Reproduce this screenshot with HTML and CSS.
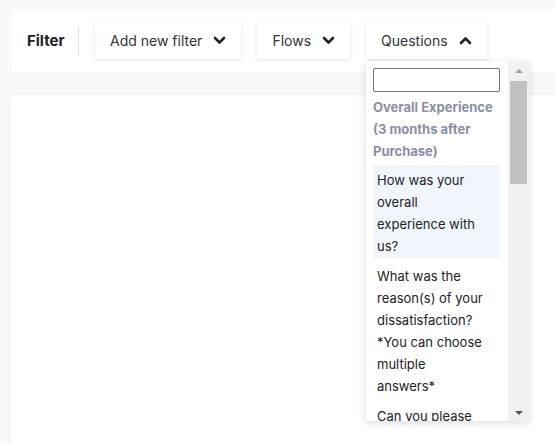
FILE: index.html
```html
<!DOCTYPE html>
<html>
<head>
<meta charset="utf-8">
<link rel="stylesheet" href="styles.css">
</head>
<body>
<div class="page">
  <div class="filterbar">
    <span class="filter-label">Filter</span>
    <span class="divider"></span>
    <div class="btn">
      <span>Add new filter</span>
      <svg class="chev" width="13" height="9" viewBox="0 0 13 9"><path d="M2 2 L6.5 6.5 L11 2" fill="none" stroke="#222" stroke-width="2.6" stroke-linecap="round" stroke-linejoin="round"/></svg>
    </div>
    <div class="btn">
      <span>Flows</span>
      <svg class="chev" width="13" height="9" viewBox="0 0 13 9"><path d="M2 2 L6.5 6.5 L11 2" fill="none" stroke="#222" stroke-width="2.6" stroke-linecap="round" stroke-linejoin="round"/></svg>
    </div>
    <div class="btn btn-open">
      <span>Questions</span>
      <svg class="chev" width="13" height="9" viewBox="0 0 13 9"><path d="M2 7 L6.5 2.5 L11 7" fill="none" stroke="#222" stroke-width="2.6" stroke-linecap="round" stroke-linejoin="round"/></svg>
      <div class="dropdown">
        <div class="list">
          <input class="search" type="text">
          <div class="group">Overall Experience (3 months after Purchase)</div>
          <div class="option active">How was your overall experience with us?</div>
          <div class="option">What was the reason(s) of your dissatisfaction? *You can choose multiple answers*</div>
          <div class="option">Can you please tell us more?</div>
        </div>
        <div class="scrollbar">
          <div class="arrow arrow-up"></div>
          <div class="thumb"></div>
          <div class="track"></div>
          <div class="arrow arrow-down"></div>
        </div>
      </div>
    </div>
  </div>
  <div class="content"></div>
</div>
</body>
</html>
```

FILE: styles.css
```css
html, body {
  margin: 0;
  padding: 0;
  background: #f8f9fb;
  font-family: Inter, "Open Sans", sans-serif;
  overflow: hidden;
}
.page {
  padding: 9px 0 0 11px;
  height: 444px;
  box-sizing: border-box;
  display: flex;
  flex-direction: column;
  gap: 23px;
}
.filterbar {
  background: #fff;
  height: 63px;
  display: flex;
  align-items: center;
  padding-left: 16px;
  gap: 16px;
  position: relative;
  z-index: 2;
  box-shadow: 0 0 3px rgba(0,0,0,0.04);
}
.filter-label {
  font-size: 15px;
  font-weight: 700;
  color: #222;
  width: 35px;
}
.divider {
  width: 1px;
  height: 28px;
  background: #dcdcdf;
}
.btn {
  position: relative;
  height: 37px;
  display: flex;
  align-items: center;
  gap: 11px;
  padding: 0 15px 0 15px;
  background: #fff;
  font-size: 14px;
  color: #333;
  box-shadow: 0 1px 4px rgba(0,0,0,0.12);
  border-radius: 2px;
  box-sizing: border-box;
}
.chev { display: block; }
.dropdown {
  position: absolute;
  top: 39px;
  left: 0;
  width: 163px;
  height: 360px;
  background: #fff;
  box-shadow: 0 2px 8px rgba(0,0,0,0.14);
  display: flex;
}
.list {
  flex: 1;
  overflow: hidden;
  padding: 7px 8px 0 7px;
}
.search {
  display: block;
  width: 127px;
  height: 24px;
  box-sizing: border-box;
  border: 1px solid #767676;
  border-radius: 2px;
  margin: 0 0 4px 0;
}
.group {
  font-size: 13px;
  line-height: 22px;
  font-weight: 700;
  color: #8c8da6;
  margin-bottom: 3px;
}
.option {
  font-size: 13px;
  line-height: 22px;
  color: #222;
  padding: 4px 16px 4px 4px;
}
.option.active {
  background: #f1f6fd;
  padding-bottom: 1px;
  margin-bottom: 3px;
}
.scrollbar {
  width: 21px;
  background: #f1f1f1;
  display: flex;
  flex-direction: column;
  align-items: center;
}
.arrow {
  height: 20px;
  width: 100%;
  position: relative;
}
.arrow-up::after, .arrow-down::after {
  content: "";
  position: absolute;
  left: 7px;
  width: 0;
  height: 0;
  border-left: 4px solid transparent;
  border-right: 4px solid transparent;
}
.arrow-up::after {
  top: 8px;
  border-bottom: 4px solid #a3a3a3;
}
.arrow-down::after {
  top: 10px;
  border-top: 4px solid #505050;
}
.thumb {
  width: 17px;
  height: 103px;
  background: #c1c1c1;
}
.track { flex: 1; }
.content {
  flex: 1;
  background: #fff;
  box-shadow: 0 0 5px rgba(0,0,0,0.06);
}
```
